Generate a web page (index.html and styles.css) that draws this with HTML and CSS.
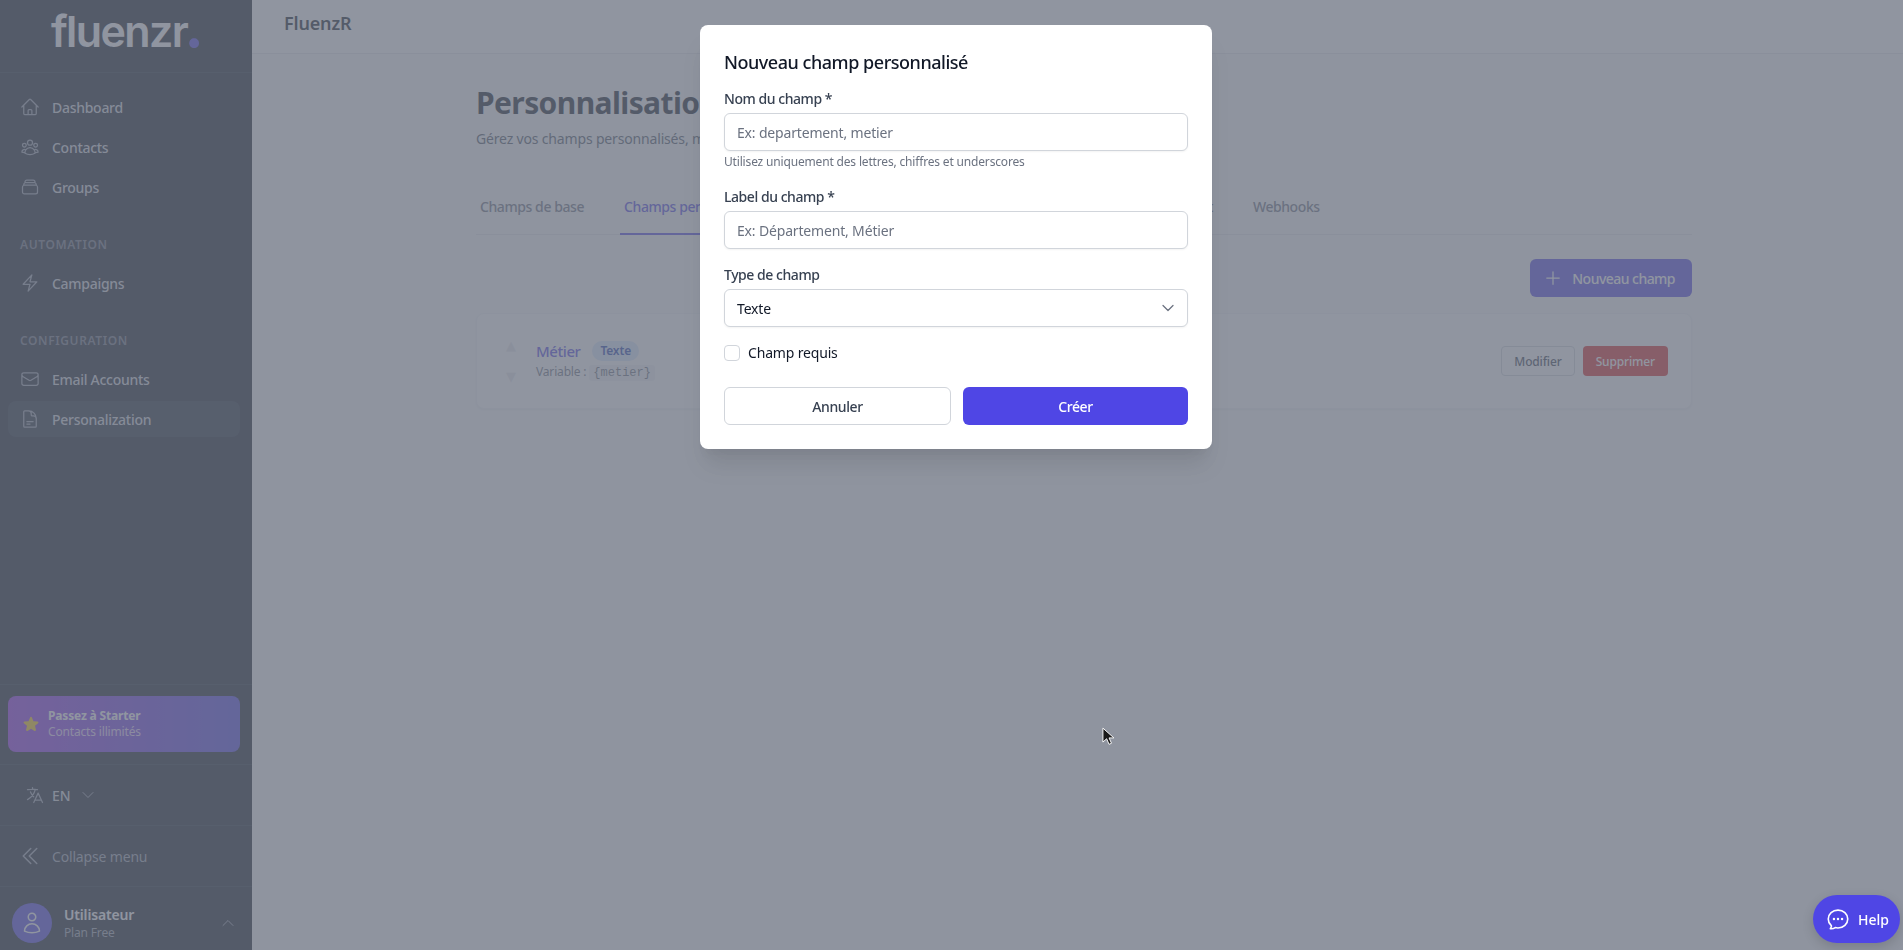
FILE: index.html
```html
<!DOCTYPE html>
<html lang="fr">
<head>
    <meta charset="UTF-8">
    <title>FluenzR - Personnalisation</title>
    <link rel="stylesheet" href="styles.css">
</head>
<body>
    <div class="app">
        <aside class="sidebar">
            <div class="logo"><span>fluenzr</span><span class="logo-dot">.</span></div>
            <nav class="nav">
                <a class="nav-item"><svg class="icon" viewBox="0 0 24 24"><path d="M2.25 12l8.954-8.955c.44-.439 1.152-.439 1.591 0L21.75 12M4.5 9.75v10.125c0 .621.504 1.125 1.125 1.125H9.75v-4.875c0-.621.504-1.125 1.125-1.125h2.25c.621 0 1.125.504 1.125 1.125V21h4.125c.621 0 1.125-.504 1.125-1.125V9.75M8.25 21h8.25"/></svg>Dashboard</a>
                <a class="nav-item"><svg class="icon" viewBox="0 0 24 24"><path d="M18 18.72a9.094 9.094 0 003.741-.479 3 3 0 00-4.682-2.72m.94 3.198l.001.031c0 .225-.012.447-.037.666A11.944 11.944 0 0112 21c-2.17 0-4.207-.576-5.963-1.584A6.062 6.062 0 016 18.719m12 0a5.971 5.971 0 00-.941-3.197m0 0A5.995 5.995 0 0012 12.75a5.995 5.995 0 00-5.058 2.772m0 0a3 3 0 00-4.681 2.72 8.986 8.986 0 003.74.477m.94-3.197a5.971 5.971 0 00-.94 3.197M15 6.75a3 3 0 11-6 0 3 3 0 016 0zm6 3a2.25 2.25 0 11-4.5 0 2.25 2.25 0 014.5 0zm-13.5 0a2.25 2.25 0 11-4.5 0 2.25 2.25 0 014.5 0z"/></svg>Contacts</a>
                <a class="nav-item"><svg class="icon" viewBox="0 0 24 24"><path d="M6 6.878V6a2.25 2.25 0 012.25-2.25h7.5A2.25 2.25 0 0118 6v.878m-12 0c.235-.083.487-.128.75-.128h10.5c.263 0 .515.045.75.128m-12 0A2.25 2.25 0 004.5 9v.878m13.5-3A2.25 2.25 0 0119.5 9v.878m0 0a2.246 2.246 0 00-.75-.128H5.25c-.263 0-.515.045-.75.128m15 0A2.25 2.25 0 0121 12v6a2.25 2.25 0 01-2.25 2.25H5.25A2.25 2.25 0 013 18v-6c0-.98.626-1.813 1.5-2.122"/></svg>Groups</a>
                <div class="nav-title">AUTOMATION</div>
                <a class="nav-item"><svg class="icon" viewBox="0 0 24 24"><path d="M3.75 13.5l10.5-11.25L12 10.5h8.25L9.75 21.75 12 13.5H3.75z"/></svg>Campaigns</a>
                <div class="nav-title">CONFIGURATION</div>
                <a class="nav-item"><svg class="icon" viewBox="0 0 24 24"><path d="M21.75 6.75v10.5a2.25 2.25 0 01-2.25 2.25h-15a2.25 2.25 0 01-2.25-2.25V6.75m19.5 0A2.25 2.25 0 0019.5 4.5h-15a2.25 2.25 0 00-2.25 2.25m19.5 0v.243a2.25 2.25 0 01-1.07 1.916l-7.5 4.615a2.25 2.25 0 01-2.36 0L3.32 8.91a2.25 2.25 0 01-1.07-1.916V6.75"/></svg>Email Accounts</a>
                <a class="nav-item active"><svg class="icon" viewBox="0 0 24 24"><path d="M19.5 14.25v-2.625a3.375 3.375 0 00-3.375-3.375h-1.5A1.125 1.125 0 0113.5 7.125v-1.5a3.375 3.375 0 00-3.375-3.375H8.25m0 12.75h7.5m-7.5 3H12M10.5 2.25H5.625c-.621 0-1.125.504-1.125 1.125v17.25c0 .621.504 1.125 1.125 1.125h12.75c.621 0 1.125-.504 1.125-1.125V11.25a9 9 0 00-9-9z"/></svg>Personalization</a>
            </nav>
            <div class="side-section upgrade-wrap">
                <a class="upgrade">
                    <svg class="icon star" viewBox="0 0 24 24"><path d="M10.788 3.21c.448-1.077 1.976-1.077 2.424 0l2.082 5.007 5.404.433c1.164.093 1.636 1.545.749 2.305l-4.117 3.527 1.257 5.273c.271 1.136-.964 2.033-1.96 1.425L12 18.354 7.373 21.18c-.996.608-2.231-.29-1.96-1.425l1.257-5.273-4.117-3.527c-.887-.76-.415-2.212.749-2.305l5.404-.433 2.082-5.006z"/></svg>
                    <div>
                        <div class="upgrade-title">Passez à Starter</div>
                        <div class="upgrade-sub">Contacts illimités</div>
                    </div>
                </a>
            </div>
            <div class="side-section lang">
                <svg class="icon" viewBox="0 0 24 24"><path d="M10.5 21l5.25-11.25L21 21m-9-3h7.5M3 5.621a48.474 48.474 0 016-.371m0 0c1.12 0 2.233.038 3.334.114M9 5.25V3m3.334 2.364C11.176 10.658 7.69 15.08 3 17.502m9.334-12.138c.896.061 1.785.147 2.666.257m-4.589 8.495a18.023 18.023 0 01-3.827-5.802"/></svg>
                <span>EN</span>
                <svg class="icon small" viewBox="0 0 24 24"><path d="M19.5 8.25l-7.5 7.5-7.5-7.5"/></svg>
            </div>
            <div class="side-section collapse">
                <svg class="icon" viewBox="0 0 24 24"><path d="M18.75 19.5l-7.5-7.5 7.5-7.5m-6 15L5.25 12l7.5-7.5"/></svg>
                <span>Collapse menu</span>
            </div>
            <div class="side-section user">
                <div class="avatar"><svg class="icon" viewBox="0 0 24 24"><path d="M15.75 6a3.75 3.75 0 11-7.5 0 3.75 3.75 0 017.5 0zM4.501 20.118a7.5 7.5 0 0114.998 0A17.933 17.933 0 0112 21.75c-2.676 0-5.216-.584-7.499-1.632z"/></svg></div>
                <div class="user-info">
                    <div class="user-name">Utilisateur</div>
                    <div class="user-plan">Plan Free</div>
                </div>
                <svg class="icon small" viewBox="0 0 24 24"><path d="M4.5 15.75l7.5-7.5 7.5 7.5"/></svg>
            </div>
        </aside>

        <div class="main">
            <header class="topbar">FluenzR</header>
            <div class="content">
                <h1>Personnalisation</h1>
                <p class="subtitle">Gérez vos champs personnalisés, modèles et intégrations</p>
                <div class="tabs">
                    <a class="tab">Champs de base</a>
                    <a class="tab active">Champs personnalisés</a>
                    <a class="tab">Signature mail</a>
                    <a class="tab">Pied de mail</a>
                    <a class="tab">Page de désabonnement</a>
                    <a class="tab">Webhooks</a>
                </div>
                <div class="toolbar">
                    <button class="btn-new"><svg class="icon" viewBox="0 0 24 24"><path d="M12 4.5v15m7.5-7.5h-15"/></svg>Nouveau champ</button>
                </div>
                <div class="field-card">
                    <div class="order">
                        <span>▲</span>
                        <span>▼</span>
                    </div>
                    <div class="field-info">
                        <div class="field-head">
                            <span class="field-name">Métier</span>
                            <span class="badge">Texte</span>
                        </div>
                        <div class="field-var">Variable : <code>{metier}</code></div>
                    </div>
                    <div class="field-actions">
                        <button class="btn-small">Modifier</button>
                        <button class="btn-small danger">Supprimer</button>
                    </div>
                </div>
            </div>
        </div>
    </div>

    <div class="overlay">
        <form class="modal">
            <h2>Nouveau champ personnalisé</h2>
            <label class="label">Nom du champ *</label>
            <input class="input" type="text" placeholder="Ex: departement, metier">
            <p class="help-text">Utilisez uniquement des lettres, chiffres et underscores</p>
            <label class="label second">Label du champ *</label>
            <input class="input" type="text" placeholder="Ex: Département, Métier">
            <label class="label third">Type de champ</label>
            <div class="select">
                <span>Texte</span>
                <svg class="icon" viewBox="0 0 24 24"><path d="M6 9l6 6 6-6"/></svg>
            </div>
            <label class="check-row"><span class="check"></span>Champ requis</label>
            <div class="modal-actions">
                <button type="button" class="btn-cancel">Annuler</button>
                <button type="button" class="btn-create">Créer</button>
            </div>
        </form>
    </div>

    <button class="help-btn">
        <svg class="icon" viewBox="0 0 24 24"><path d="M8.625 12a.375.375 0 11-.75 0 .375.375 0 01.75 0zm0 0H8.25m4.125 0a.375.375 0 11-.75 0 .375.375 0 01.75 0zm0 0H12m4.125 0a.375.375 0 11-.75 0 .375.375 0 01.75 0zm0 0h-.375M21 12c0 4.556-4.03 8.25-9 8.25a9.764 9.764 0 01-2.555-.337A5.972 5.972 0 015.41 20.97a5.969 5.969 0 01-.474-.065 4.48 4.48 0 00.978-2.025c.09-.457-.133-.901-.467-1.226C3.93 16.178 3 14.189 3 12c0-4.556 4.03-8.25 9-8.25s9 3.694 9 8.25z"/></svg>
        Help
    </button>

    <svg class="cursor" viewBox="0 0 14 20"><path d="M1 1v15l4-3.6 2.6 6 2.6-1.1-2.6-5.8h5.2z"/></svg>
</body>
</html>
```
FILE: styles.css
```css
* {
    box-sizing: border-box;
}
body {
    margin: 0;
    height: 950px;
    overflow: hidden;
    font-family: "Noto Sans", sans-serif;
    font-size: 14px;
    letter-spacing: -0.012em;
    color: #111827;
    background: #f9fafb;
}
button {
    font-family: inherit;
}
.icon {
    width: 20px;
    height: 20px;
    flex: none;
    fill: none;
    stroke: currentColor;
    stroke-width: 1.5;
    stroke-linecap: round;
    stroke-linejoin: round;
}
.icon.small {
    width: 16px;
    height: 16px;
}
.app {
    display: flex;
    height: 100%;
}

/* sidebar */
.sidebar {
    width: 252px;
    flex: none;
    display: flex;
    flex-direction: column;
    background: #111827;
    color: #d1d5db;
}
.logo {
    height: 73px;
    padding-left: 51px;
    border-bottom: 1px solid #1f2937;
    font-family: Inter, sans-serif;
    font-size: 43px;
    font-weight: 600;
    letter-spacing: -1.6px;
    line-height: 50px;
    color: #ffffff;
}
.logo-dot {
    margin-left: -3px;
    font-size: 62px;
    color: #4f46e5;
}
.nav {
    padding: 16px 12px 0 8px;
}
.nav-item {
    display: flex;
    align-items: center;
    gap: 12px;
    height: 36px;
    margin-bottom: 4px;
    padding-left: 12px;
    border-radius: 8px;
    font-weight: 500;
    letter-spacing: -0.02em;
}
.nav-item .icon {
    color: #9ca3af;
}
.nav-item.active {
    background: #1f2937;
}
.nav-title {
    height: 16px;
    margin: 31px 0 13px 12px;
    font-size: 12px;
    font-weight: 600;
    letter-spacing: 0.6px;
    color: #6b7280;
}
.side-section {
    border-top: 1px solid #1f2937;
}
.upgrade-wrap {
    margin-top: auto;
    padding: 11px 12px 12px 8px;
}
.upgrade {
    display: flex;
    align-items: center;
    gap: 8px;
    height: 56px;
    padding-left: 14px;
    border-radius: 8px;
    background: linear-gradient(90deg, #9333ea, #4f46e5);
    color: #ffffff;
    font-size: 12px;
    line-height: 16px;
}
.star {
    width: 18px;
    height: 18px;
    fill: #facc15;
    stroke: none;
}
.upgrade-title {
    font-weight: 700;
}
.upgrade-sub {
    color: #e9d5ff;
}
.lang {
    display: flex;
    align-items: center;
    height: 61px;
    padding-left: 25px;
    gap: 7px;
    font-weight: 500;
}
.lang .icon {
    color: #9ca3af;
}
.lang .small {
    margin-left: 3px;
}
.collapse {
    display: flex;
    align-items: center;
    gap: 10px;
    height: 61px;
    padding-left: 18px;
    color: #9ca3af;
}
.collapse .icon {
    width: 24px;
    height: 24px;
}
.user {
    display: flex;
    align-items: flex-start;
    height: 64px;
    padding: 16px 12px 0;
    gap: 12px;
}
.avatar {
    width: 40px;
    height: 40px;
    flex: none;
    display: flex;
    align-items: center;
    justify-content: center;
    border-radius: 50%;
    background: #4f46e5;
    color: #ffffff;
}
.avatar .icon {
    width: 24px;
    height: 24px;
}
.user-info {
    flex: 1;
    padding-top: 2px;
}
.user-name {
    font-weight: 600;
    color: #ffffff;
    line-height: 20px;
}
.user-plan {
    font-size: 12px;
    line-height: 16px;
    color: #9ca3af;
}
.user .small {
    margin: 12px 4px 0 0;
    color: #9ca3af;
}

/* main */
.main {
    flex: 1;
}
.topbar {
    height: 54px;
    padding-left: 32px;
    border-bottom: 1px solid #e5e7eb;
    background: #ffffff;
    font-size: 18px;
    font-weight: 600;
    line-height: 46px;
    letter-spacing: -0.01em;
    color: #111827;
}
.content {
    width: 1216px;
    margin-left: 224px;
    padding-top: 31px;
}
h1 {
    margin: 0;
    font-size: 30px;
    font-weight: 700;
    line-height: 36px;
    letter-spacing: -0.02em;
    color: #111827;
}
.subtitle {
    margin: 8px 0 0;
    line-height: 20px;
    color: #4b5563;
}
.tabs {
    display: flex;
    gap: 32px;
    margin-top: 32px;
    border-bottom: 1px solid #e5e7eb;
}
.tab {
    padding: 16px 4px;
    height: 54px;
    margin-bottom: -1px;
    font-weight: 500;
    line-height: 20px;
    letter-spacing: -0.03em;
    color: #6b7280;
    border-bottom: 2px solid transparent;
    white-space: nowrap;
}
.tab.active {
    color: #4f46e5;
    border-bottom-color: #4f46e5;
}
.toolbar {
    display: flex;
    justify-content: flex-end;
    margin: 24px 0 16px;
}
.btn-new {
    display: flex;
    align-items: center;
    gap: 9px;
    height: 38px;
    padding: 0 17px 0 13px;
    border: none;
    border-radius: 6px;
    background: #4f46e5;
    color: #ffffff;
    font-size: 14px;
    font-weight: 500;
    letter-spacing: -0.038em;
}
.field-card {
    display: flex;
    align-items: center;
    height: 96px;
    padding: 0 23px;
    border: 1px solid #f3f4f6;
    border-radius: 8px;
    background: #ffffff;
    box-shadow: 0 1px 2px rgba(0, 0, 0, 0.05);
}
.order {
    width: 22px;
    margin-right: 14px;
    display: flex;
    flex-direction: column;
    gap: 15px;
    align-items: center;
    font-family: "DejaVu Sans", sans-serif;
    font-size: 13px;
    line-height: 16px;
    color: #e5e7eb;
}
.field-info {
    flex: 1;
}
.field-head {
    display: flex;
    align-items: center;
    gap: 12px;
    margin-top: -2px;
}
.field-name {
    font-size: 15px;
    font-weight: 500;
    line-height: 24px;
    letter-spacing: -0.03em;
    color: #4f46e5;
}
.badge {
    padding: 0 8px;
    height: 20px;
    border-radius: 10px;
    background: #dbeafe;
    color: #1e40af;
    font-size: 12px;
    font-weight: 600;
    line-height: 20px;
}
.field-var {
    font-size: 12px;
    line-height: 18px;
    color: #6b7280;
}
code {
    padding: 1px 4px;
    border-radius: 3px;
    background: #f3f4f6;
    font-family: "Liberation Mono", monospace;
    font-size: 12px;
    letter-spacing: 0;
}
.field-actions {
    display: flex;
    gap: 8px;
}
.btn-small {
    height: 30px;
    padding: 0 12px;
    border: 1px solid #d1d5db;
    border-radius: 4px;
    background: #ffffff;
    color: #374151;
    font-size: 12px;
    font-weight: 500;
    letter-spacing: -0.012em;
}
.btn-small.danger {
    padding: 0 13px;
    border: none;
    background: #dc2626;
    color: #ffffff;
}

/* modal */
.overlay {
    position: fixed;
    inset: 0;
    display: flex;
    justify-content: center;
    align-items: flex-start;
    padding: 25px 0 0 9px;
    background: rgba(107, 114, 128, 0.75);
}
.modal {
    width: 512px;
    padding: 24px;
    border-radius: 8px;
    background: #ffffff;
    box-shadow: 0 20px 25px -5px rgba(0, 0, 0, 0.1), 0 10px 10px -5px rgba(0, 0, 0, 0.04);
}
h2 {
    margin: 0 0 14px;
    font-size: 18px;
    font-weight: 500;
    line-height: 26px;
    letter-spacing: -0.026em;
    color: #111827;
}
.label {
    display: block;
    margin-bottom: 4px;
    font-weight: 500;
    line-height: 20px;
    letter-spacing: -0.032em;
    color: #374151;
}
.label.second {
    margin-top: 17px;
}
.label.third {
    margin-top: 16px;
}
.input, .select {
    display: block;
    width: 100%;
    height: 38px;
    padding: 0 12px;
    border: 1px solid #d1d5db;
    border-radius: 6px;
    background: #ffffff;
    box-shadow: 0 1px 2px rgba(0, 0, 0, 0.05);
    font-family: inherit;
    font-size: 14px;
    letter-spacing: -0.012em;
    color: #111827;
}
.input::placeholder {
    color: #6b7280;
    opacity: 1;
}
.help-text {
    margin: 3px 0 0;
    font-size: 12px;
    line-height: 16px;
    color: #6b7280;
}
.select {
    display: flex;
    align-items: center;
    justify-content: space-between;
    padding-right: 9px;
}
.select .icon {
    color: #6b7280;
}
.check-row {
    display: flex;
    align-items: center;
    gap: 8px;
    margin-top: 18px;
    line-height: 16px;
    color: #111827;
}
.check {
    width: 16px;
    height: 16px;
    border: 1px solid #d1d5db;
    border-radius: 4px;
}
.modal-actions {
    display: flex;
    gap: 12px;
    margin-top: 26px;
}
.modal-actions button {
    flex: 1;
    height: 38px;
    border-radius: 6px;
    font-size: 14px;
    font-weight: 500;
    letter-spacing: -0.03em;
}
.btn-cancel {
    border: 1px solid #d1d5db;
    background: #ffffff;
    color: #374151;
}
.btn-create {
    border: none;
    background: #4f46e5;
    color: #ffffff;
}

/* floating bits */
.help-btn {
    position: fixed;
    right: 3px;
    bottom: 7px;
    display: flex;
    align-items: center;
    gap: 7px;
    width: 87px;
    height: 48px;
    padding: 0 0 0 12px;
    border: none;
    border-radius: 24px;
    background: #4f46e5;
    color: #ffffff;
    font-size: 14px;
    font-weight: 500;
    box-shadow: 0 4px 12px rgba(0, 0, 0, 0.15);
}
.help-btn .icon {
    width: 26px;
    height: 26px;
}
.cursor {
    position: fixed;
    left: 1102px;
    top: 727px;
    width: 13px;
    height: 19px;
    fill: #1a1a1a;
    stroke: #ffffff;
    stroke-width: 1;
}
```
